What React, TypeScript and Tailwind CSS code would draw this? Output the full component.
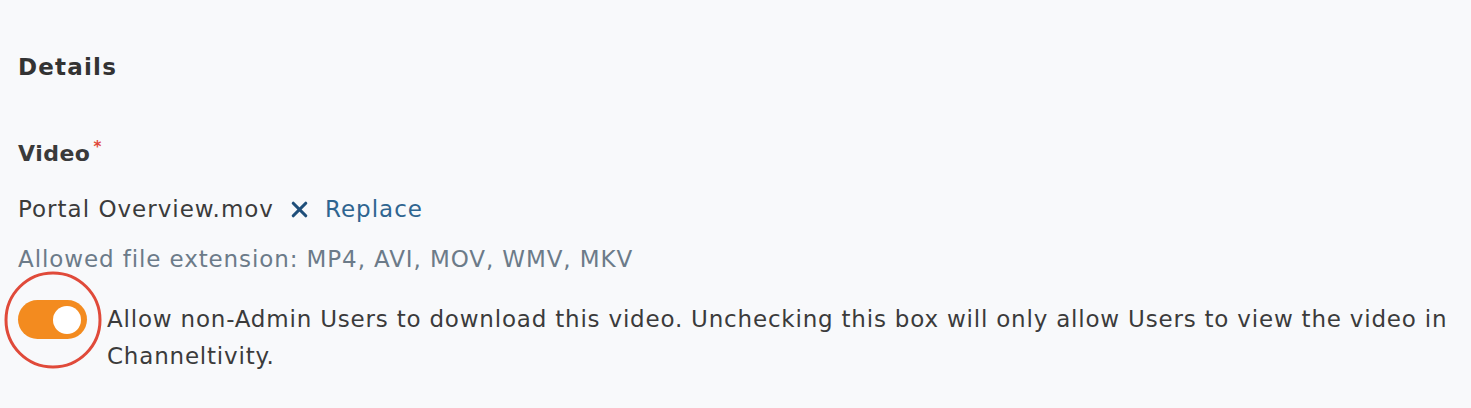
import { X } from 'lucide-react';

const App = () => {
  return (
    <div
      className="w-full h-[408px] bg-[#f8f9fb] px-[18px] pt-[51px] text-[#3b3b3b]"
      style={{ fontFamily: '"DejaVu Sans", "Noto Sans", sans-serif' }}
    >
      {/* Section title */}
      <h2 className="text-[23px] leading-[32px] font-semibold tracking-[1.2px] text-[#333333]">Details</h2>

      {/* Video field */}
      <div className="mt-[56px] text-[22px] leading-[30px] font-semibold tracking-[0.5px] text-[#3a3a3a]">
        Video
        <span className="relative -top-[9px] ml-[3px] text-[15px] text-[#e0483a]">*</span>
      </div>

      <div className="mt-[23px] flex items-center text-[23px] leading-[30px] tracking-[1px]">
        <span>Portal Overview.mov</span>
        <button className="ml-[13px] flex items-center text-[#1f4f7a]">
          <X size={25} strokeWidth={3} />
        </button>
        <button className="ml-[13px] text-[#2f6590]">Replace</button>
      </div>

      <div className="mt-[20px] text-[23px] leading-[30px] tracking-[0.9px] text-[#6c7b89]">
        Allowed file extension: MP4, AVI, MOV, WMV, MKV
      </div>

      {/* Download toggle */}
      <div className="mt-[27px] flex items-start">
        <div className="relative mt-[-1px] shrink-0">
          <div className="flex h-[39px] w-[69px] items-center justify-end rounded-full bg-[#f38b1f] pr-[6px]">
            <div className="h-[28px] w-[28px] rounded-full bg-white" />
          </div>
          {/* highlight ring */}
          <div className="pointer-events-none absolute left-1/2 top-1/2 h-[97px] w-[97px] -translate-x-1/2 -translate-y-1/2 rounded-full border-[3px] border-[#e04a3a]" />
        </div>
        <p className="ml-[20px] flex-1 text-[23px] leading-[37px] tracking-[0.8px]">
          Allow non-Admin Users to download this video. Unchecking this box will only allow Users to view the video in
          Channeltivity.
        </p>
      </div>
    </div>
  );
};

export default App;
